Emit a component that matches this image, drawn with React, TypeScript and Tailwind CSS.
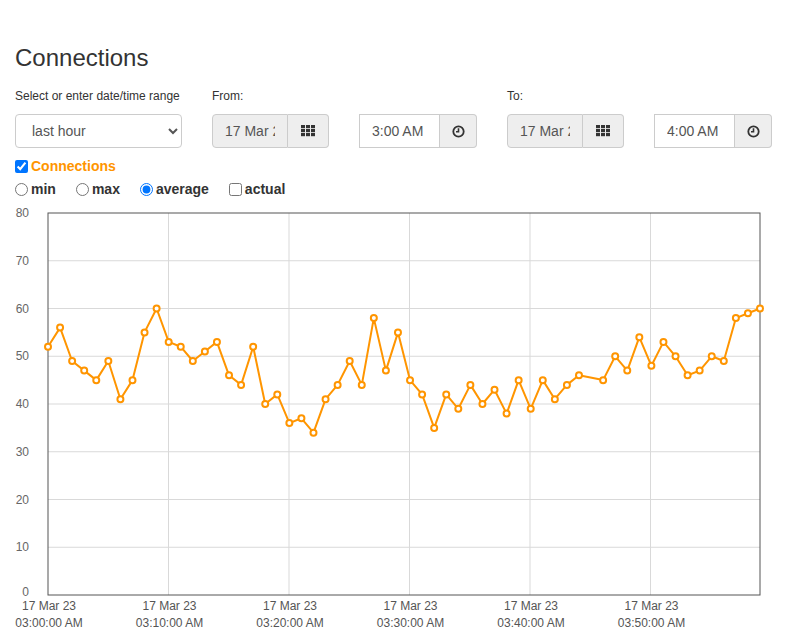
import React from 'react';

const values: (number | null)[] = [
  52, 56, 49, 47, 45, 49, 41, 45, 55, 60, 53, 52, 49, 51, 53, 46, 44, 52, 40, 42,
  36, 37, 34, 41, 44, 49, 44, 58, 47, 55, 45, 42, 35, 42, 39, 44, 40, 43, 38, 45,
  39, 45, 41, 44, 46, null, 45, 50, 47, 54, 48, 53, 50, 46, 47, 50, 49, 58, 59, 60,
];

const left = 48;
const right = 760;
const top = 13;
const bottom = 395;
const step = (right - left) / 59;
const yOf = (v: number) => bottom - ((bottom - top) * v) / 80;

const GridIcon = () => (
  <svg width="14" height="12" viewBox="0 0 14 12" fill="#333">
    {[0, 5, 10].map((x) =>
      [0, 4, 8].map((y) => <rect key={`${x}-${y}`} x={x} y={y} width="4" height="3.2" />),
    )}
  </svg>
);

const ClockIcon = () => (
  <svg width="13" height="13" viewBox="0 0 13 13" fill="none" stroke="#333">
    <circle cx="6.5" cy="6.5" r="5.2" strokeWidth="1.8" />
    <path d="M6.5 3.2V6.8H4" strokeWidth="1.6" />
  </svg>
);

const Chart = () => {
  const pts = values
    .map((v, i) => (v === null ? null : { x: left + i * step, y: yOf(v) }))
    .filter(Boolean) as { x: number; y: number }[];
  const path = pts.map((p, i) => `${i === 0 ? 'M' : 'L'}${p.x.toFixed(1)} ${p.y.toFixed(1)}`).join(' ');
  const xTicks = ['03:00:00 AM', '03:10:00 AM', '03:20:00 AM', '03:30:00 AM', '03:40:00 AM', '03:50:00 AM'];

  return (
    <svg width="787" height="434" className="block" style={{ fontFamily: '"Liberation Sans", Arial, sans-serif' }}>
      {[10, 20, 30, 40, 50, 60, 70].map((v) => (
        <line key={v} x1={left} x2={right} y1={yOf(v)} y2={yOf(v)} stroke="#d9d9d9" strokeWidth="1" />
      ))}
      {[1, 2, 3, 4, 5].map((k) => (
        <line key={k} x1={left + k * 120.5} x2={left + k * 120.5} y1={top} y2={bottom} stroke="#d9d9d9" strokeWidth="1" />
      ))}
      <rect x={left} y={top} width={right - left} height={bottom - top} fill="none" stroke="#555" strokeWidth="1" />
      {[0, 10, 20, 30, 40, 50, 60, 70, 80].map((v) => (
        <text key={v} x="29" y={yOf(v) + 4 - (v === 0 ? 3 : 0)} textAnchor="end" fontSize="12" fill="#666">
          {v}
        </text>
      ))}
      {xTicks.map((t, k) => (
        <g key={t}>
          <text x={left + 1 + k * 120.5} y="410" textAnchor="middle" fontSize="12" fill="#555">
            17 Mar 23
          </text>
          <text x={left + 1 + k * 120.5} y="427" textAnchor="middle" fontSize="12" fill="#555">
            {t}
          </text>
        </g>
      ))}
      <path d={path} fill="none" stroke="#ff9500" strokeWidth="2" strokeLinejoin="round" />
      {pts.map((p, i) => (
        <circle key={i} cx={p.x} cy={p.y} r="3" fill="#fff" stroke="#ff9500" strokeWidth="2" />
      ))}
    </svg>
  );
};

const DateGroup = ({ label }: { label: string }) => (
  <div className="flex flex-col">
    <label className="h-[17px] mb-[9px] text-xs text-[#333]">{label}</label>
    <div className="flex h-[34px] w-[117px]">
      <input
        readOnly
        value="17 Mar 2023"
        className="w-[76px] h-full rounded-l border border-[#ccc] bg-[#eee] px-3 text-sm text-[#555] outline-none"
      />
      <button className="flex-1 flex items-center justify-center rounded-r border border-l-0 border-[#ccc] bg-[#eee]">
        <GridIcon />
      </button>
    </div>
  </div>
);

const TimeGroup = ({ time }: { time: string }) => (
  <div className="flex flex-col">
    <div className="h-[17px] mb-[9px]" />
    <div className="flex h-[34px] w-[118px]">
      <input
        readOnly
        value={time}
        className="w-[81px] h-full border border-[#ccc] bg-white px-3 text-sm text-[#555] outline-none"
      />
      <button className="flex-1 flex items-center justify-center rounded-r border border-l-0 border-[#ccc] bg-[#eee]">
        <ClockIcon />
      </button>
    </div>
  </div>
);

const App = () => {
  return (
    <div className="w-[787px] h-[634px] bg-white overflow-hidden" style={{ fontFamily: '"Liberation Sans", Arial, sans-serif' }}>
      <div className="pl-[15px]">
        <h1 className="pt-[45px] text-[24px] leading-[26px] text-[#333]">Connections</h1>
        <div className="mt-[17px] flex gap-[30px]">
          <div className="flex flex-col">
            <label className="h-[17px] mb-[9px] text-xs text-[#333]">Select or enter date/time range</label>
            <select
              defaultValue="last hour"
              className="w-[167px] h-[34px] rounded border border-[#ccc] bg-white pl-3 pr-2 text-sm text-[#555]"
            >
              <option>last hour</option>
              <option>last day</option>
              <option>last week</option>
            </select>
          </div>
          <DateGroup label="From:" />
          <TimeGroup time="3:00 AM" />
          <DateGroup label="To:" />
          <TimeGroup time="4:00 AM" />
        </div>
        <div className="mt-[8px] h-[20px] flex items-center">
          <input type="checkbox" defaultChecked className="w-[13px] h-[13px] m-0" />
          <span className="ml-[3px] text-sm font-bold text-[#ff9500]">Connections</span>
        </div>
        <div className="mt-[2px] h-[22px] flex items-center text-sm font-bold text-[#333]">
          <label className="flex items-center">
            <input type="radio" name="agg" className="w-[13px] h-[13px] m-0" />
            <span className="ml-[3px]">min</span>
          </label>
          <label className="flex items-center ml-[20px]">
            <input type="radio" name="agg" className="w-[13px] h-[13px] m-0" />
            <span className="ml-[3px]">max</span>
          </label>
          <label className="flex items-center ml-[20px]">
            <input type="radio" name="agg" defaultChecked className="w-[13px] h-[13px] m-0" />
            <span className="ml-[3px]">average</span>
          </label>
          <label className="flex items-center ml-[20px]">
            <input type="checkbox" className="w-[13px] h-[13px] m-0" />
            <span className="ml-[3px]">actual</span>
          </label>
        </div>
      </div>
      <Chart />
    </div>
  );
};

export default App;
